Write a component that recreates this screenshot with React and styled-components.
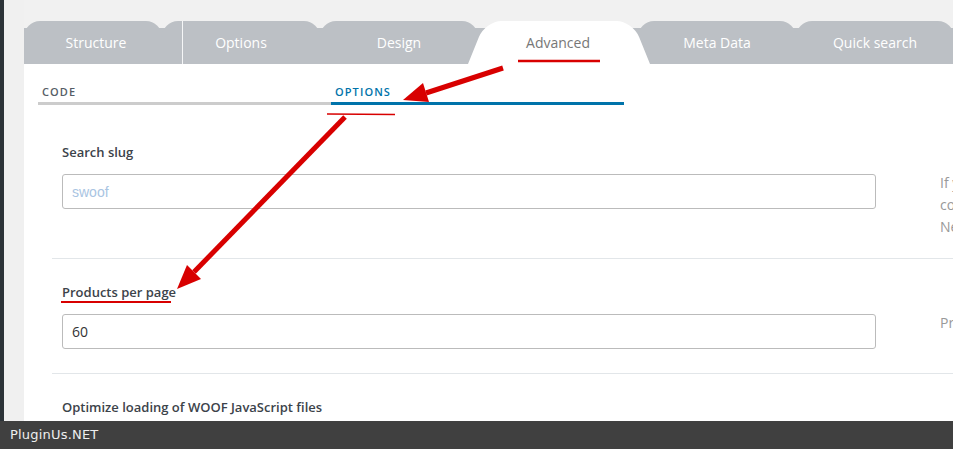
import styled, { createGlobalStyle } from "styled-components";

const GlobalStyle = createGlobalStyle`
  html, body {
    margin: 0;
    padding: 0;
    overflow: hidden;
    background: #f1f1f1;
  }
  body {
    font-family: "Open Sans", "Liberation Sans", sans-serif;
  }
`;

const Page = styled.div`
  position: relative;
  display: flex;
  width: 953px;
  height: 449px;
  overflow: hidden;
  background: #f1f1f1;
`;

const AdminBar = styled.div`
  flex: 0 0 4px;
  background: #2c3338;
`;

const Gutter = styled.div`
  flex: 0 0 20px;
  background: #f0f0f0;
`;

const Main = styled.div`
  flex: 1;
  min-width: 0;
  display: flex;
  flex-direction: column;
  padding-top: 21px;
`;

const TabBar = styled.div`
  display: flex;
  height: 43px;
  background: linear-gradient(to bottom, transparent 7px, #bcc0c5 7px);
`;

const Tab = styled.div`
  position: relative;
  flex: 0 0 ${(p) => p.$w || 158}px;
  display: flex;
  align-items: center;
  justify-content: center;
  padding-left: ${(p) => p.$shift || 0}px;
  box-sizing: border-box;
  font-size: 14px;
  color: #fff;
  background: #bcc0c5;
  border-radius: 16px 16px 0 0;
  z-index: 1;

  ${(p) =>
    p.$divider &&
    `
    &::before {
      content: "";
      position: absolute;
      left: 20px;
      top: 0;
      bottom: 0;
      width: 1px;
      background: rgba(255, 255, 255, 0.85);
    }
  `}
`;

const ActiveTab = styled.div`
  position: relative;
  flex: 0 0 160px;
  display: flex;
  align-items: center;
  justify-content: center;
  font-size: 14px;
  color: #777;
  z-index: 2;

  &::before,
  &::after {
    content: "";
    position: absolute;
    top: 0;
    bottom: 0;
    width: 100px;
    background: #fff;
    transform-origin: bottom;
    z-index: -1;
  }
  &::before {
    left: -10px;
    transform: skewX(-22deg);
    border-top-left-radius: 16px;
  }
  &::after {
    right: -12px;
    transform: skewX(22deg);
    border-top-right-radius: 16px;
  }
`;

const Panel = styled.div`
  flex: 1;
  background: #fff;
  padding: 20px 0 0 14px;
`;

const SubTabs = styled.div`
  display: flex;
`;

const SubTab = styled.div`
  flex: 0 0 293px;
  padding: 0 0 2px 4px;
  box-sizing: border-box;
  font-size: 11px;
  font-weight: 600;
  line-height: 16px;
  letter-spacing: 1.1px;
  text-transform: uppercase;
  color: ${(p) => (p.$active ? "#0073aa" : "#555d66")};
  border-bottom: 3px solid ${(p) => (p.$active ? "#0073aa" : "#cccccc")};
`;

const Fields = styled.div`
  margin: 14px 0 0 14px;
`;

const Section = styled.div`
  display: flex;
  gap: 64px;
  padding: 23px 0 20px 10px;
  border-bottom: 1px solid #e2e6e9;
`;

const FieldMain = styled.div`
  flex: 0 0 814px;
`;

const Label = styled.div`
  font-size: 13px;
  font-weight: 600;
  line-height: 20px;
  color: #3c434a;
`;

const Input = styled.input`
  display: block;
  width: 100%;
  height: 35px;
  margin: 12px 0 4px;
  padding: 0 9px;
  box-sizing: border-box;
  border: 1px solid #bbbbbb;
  border-radius: 3px;
  font-family: "Open Sans", "Liberation Sans", sans-serif;
  font-size: 14px;
  color: #333;
  background: #fff;
  outline: none;

  &::placeholder {
    font-family: "Liberation Sans", Arial, sans-serif;
    color: #a9c4e2;
  }
`;

const Desc = styled.div`
  flex: 0 0 300px;
  margin-top: 30px;
  font-size: 14px;
  line-height: 22px;
  color: #999;
  white-space: nowrap;
`;

const Watermark = styled.div`
  position: absolute;
  left: 0;
  right: 0;
  bottom: 0;
  height: 28px;
  padding-left: 10px;
  background: #404040;
  color: #eeeeee;
  font-family: "DejaVu Sans", sans-serif;
  font-size: 13px;
  line-height: 28px;
  letter-spacing: 0.2px;
  z-index: 20;
`;

const Annotations = styled.svg`
  position: absolute;
  top: 0;
  left: 0;
  pointer-events: none;
  z-index: 10;
`;

const RED = "#d80000";

const App = () => {
  return (
    <>
      <GlobalStyle />
      <Page>
        <AdminBar />
        <Gutter />
        <Main>
          <TabBar>
            <Tab $w={138} $shift={6}>Structure</Tab>
            <Tab $divider>Options</Tab>
            <Tab>Design</Tab>
            <ActiveTab>Advanced</ActiveTab>
            <Tab>Meta Data</Tab>
            <Tab>Quick search</Tab>
          </TabBar>
          <Panel>
            <SubTabs>
              <SubTab>Code</SubTab>
              <SubTab $active>Options</SubTab>
            </SubTabs>
            <Fields>
              <Section>
                <FieldMain>
                  <Label>Search slug</Label>
                  <Input placeholder="swoof" readOnly />
                </FieldMain>
                <Desc>
                  If you do not like search key 'swoof' in the search link
                  <br />
                  could replace it by your own word. But be careful
                  <br />
                  Never use the word 'product'
                </Desc>
              </Section>
              <Section>
                <FieldMain>
                  <Label>Products per page</Label>
                  <Input defaultValue="60" readOnly />
                </FieldMain>
                <Desc>Products per page when searching is going only</Desc>
              </Section>
              <Section>
                <FieldMain>
                  <Label>Optimize loading of WOOF JavaScript files</Label>
                </FieldMain>
              </Section>
            </Fields>
          </Panel>
        </Main>

        <Annotations width="953" height="449" viewBox="0 0 953 449">
          {/* underline under Advanced */}
          <line x1="518" y1="61" x2="600" y2="61" stroke={RED} strokeWidth="2.5" />
          {/* arrow to OPTIONS sub tab */}
          <line x1="503" y1="68" x2="426" y2="93" stroke={RED} strokeWidth="5" />
          <polygon points="403,100 429,102 423,83" fill={RED} />
          <line x1="327" y1="114" x2="395" y2="114.5" stroke={RED} strokeWidth="1.6" />
          {/* arrow to Products per page */}
          <line x1="345" y1="117" x2="194" y2="272" stroke={RED} strokeWidth="5" />
          <polygon points="177,289 201,279 187,265" fill={RED} />
          <line x1="61" y1="302" x2="171" y2="302" stroke={RED} strokeWidth="2" />
        </Annotations>

        <Watermark>PluginUs.NET</Watermark>
      </Page>
    </>
  );
};

export default App;
